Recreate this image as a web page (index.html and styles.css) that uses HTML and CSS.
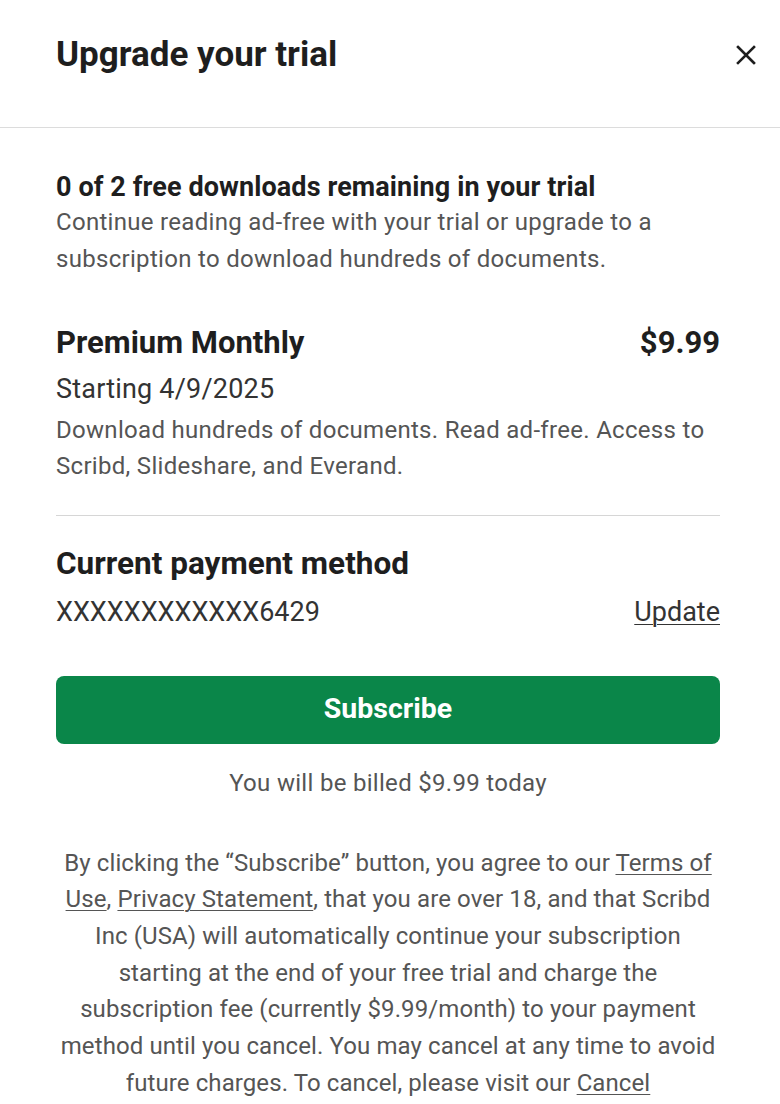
FILE: index.html
```html
<!DOCTYPE html>
<html lang="en">
<head>
<meta charset="utf-8">
<title>Upgrade your trial</title>
<link rel="stylesheet" href="styles.css">
</head>
<body>
<div class="modal">
  <header class="modal-header">
    <h1 class="title">Upgrade your trial</h1>
    <button class="close" aria-label="Close">
      <svg width="20" height="20" viewBox="0 0 20 20"><path d="M2 2 L18 18 M18 2 L2 18" stroke="#1e1e1e" stroke-width="2.6" stroke-linecap="square"/></svg>
    </button>
  </header>
  <main class="modal-body">
    <section class="intro">
      <h2 class="intro-title">0 of 2 free downloads remaining in your trial</h2>
      <p class="intro-text">Continue reading ad-free with your trial or upgrade to a subscription to download hundreds of documents.</p>
    </section>
    <section class="plan">
      <div class="plan-row">
        <h3 class="plan-name">Premium Monthly</h3>
        <span class="plan-price">$9.99</span>
      </div>
      <p class="plan-start">Starting 4/9/2025</p>
      <p class="plan-desc">Download hundreds of documents. Read ad-free. Access to Scribd, Slideshare, and Everand.</p>
    </section>
    <hr class="divider">
    <section class="payment">
      <h3 class="payment-title">Current payment method</h3>
      <div class="payment-row">
        <span class="card">XXXXXXXXXXXX6429</span>
        <a class="link" href="#">Update</a>
      </div>
    </section>
    <button class="subscribe">Subscribe</button>
    <p class="billed">You will be billed $9.99 today</p>
    <p class="legal">By clicking the “Subscribe” button, you agree to our <a class="link" href="#">Terms of Use</a>, <a class="link" href="#">Privacy Statement</a>, that you are over 18, and that Scribd Inc (USA) will automatically continue your subscription starting at the end of your free trial and charge the subscription fee (currently $9.99/month) to your payment method until you cancel. You may cancel at any time to avoid future charges. To cancel, please visit our <a class="link" href="#">Cancel Subscription</a> page.</p>
  </main>
</div>
</body>
</html>
```
FILE: styles.css
```css
* { box-sizing: border-box; }
html, body { margin: 0; padding: 0; background: #fff; }
body {
  font-family: Roboto, "Liberation Sans", sans-serif;
  color: #1e1e1e;
  height: 1104px;
  overflow: hidden;
}
.modal { width: 780px; }
.modal-header {
  display: flex;
  align-items: center;
  justify-content: space-between;
  height: 128px;
  padding: 0 24px 18px 56px;
  border-bottom: 1px solid #dcdcdc;
}
.title {
  margin: 0;
  font-size: 35px;
  font-weight: 700;
  letter-spacing: 0;
}
.close {
  background: none;
  border: 0;
  padding: 0;
  width: 20px;
  height: 20px;
  display: flex;
}
.modal-body {
  padding: 42px 60px 0 56px;
  display: flex;
  flex-direction: column;
}
.intro-title {
  margin: 0;
  font-size: 27px;
  font-weight: 700;
  line-height: 34px;
  letter-spacing: 0.1px;
}
.intro-text {
  margin: 0;
  font-size: 24px;
  line-height: 37px;
  letter-spacing: 0.3px;
  color: #555;
}
.plan { margin-top: 46px; }
.plan-row {
  display: flex;
  justify-content: space-between;
  align-items: center;
}
.plan-name, .plan-price {
  margin: 0;
  font-size: 31px;
  font-weight: 700;
  line-height: 38px;
}
.plan-start {
  margin: 10px 0 0;
  font-size: 27px;
  line-height: 34px;
  letter-spacing: 0.2px;
  color: #333;
}
.plan-desc {
  margin: 6px 0 0;
  font-size: 24px;
  line-height: 36px;
  letter-spacing: 0.3px;
  color: #555;
}
.divider {
  margin: 31px 0 0;
  border: 0;
  border-top: 1px solid #d6d6d6;
}
.payment { margin-top: 29px; }
.payment-title {
  margin: 0;
  font-size: 31.5px;
  font-weight: 700;
  line-height: 38px;
}
.payment-row {
  display: flex;
  justify-content: space-between;
  align-items: center;
  margin-top: 12px;
  font-size: 27px;
  line-height: 34px;
  color: #333;
}
.link { color: inherit; text-decoration: underline; text-underline-offset: 3px; text-decoration-thickness: 1px; }
.subscribe {
  margin-top: 47px;
  height: 68px;
  border: 0;
  border-radius: 8px;
  background: #0a8649;
  color: #fff;
  font-family: inherit;
  font-size: 28.5px;
  font-weight: 700;
  padding: 0 0 3px;
}
.billed {
  margin: 23px 0 0;
  text-align: center;
  font-size: 24px;
  line-height: 32px;
  letter-spacing: 0.3px;
  color: #555;
}
.legal {
  margin: 45.6px 0 0;
  text-align: center;
  font-size: 24px;
  line-height: 36.7px;
  letter-spacing: 0.1px;
  color: #555;
}
```
